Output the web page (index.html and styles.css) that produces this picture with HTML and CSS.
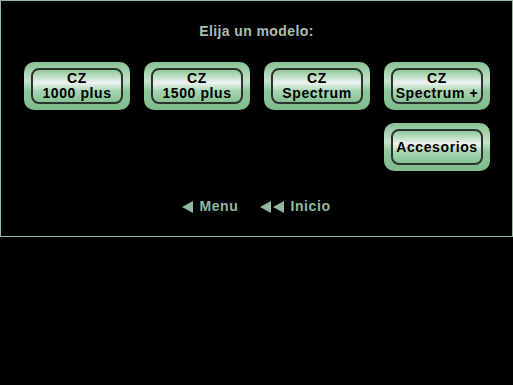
FILE: index.html
```html
<!DOCTYPE html>
<html lang="es">
<head>
    <meta charset="UTF-8">
    <title>Modelos</title>
    <link rel="stylesheet" href="styles.css">
</head>
<body>
    <div class="frame">
        <h1 class="title">Elija un modelo:</h1>
        <div class="models">
            <a class="model"><span class="inner">CZ<br>1000 plus</span></a>
            <a class="model"><span class="inner">CZ<br>1500 plus</span></a>
            <a class="model"><span class="inner">CZ<br>Spectrum</span></a>
            <a class="model"><span class="inner">CZ<br>Spectrum +</span></a>
            <a class="model extra"><span class="inner">Accesorios</span></a>
        </div>
        <div class="nav">
            <a class="link">
                <svg class="arrow" width="11" height="12" viewBox="0 0 11 12"><polygon points="11,0 11,12 0,6" fill="#8fb9a0"/></svg>
                Menu
            </a>
            <a class="link">
                <svg class="arrow" width="24" height="12" viewBox="0 0 24 12"><polygon points="11,0 11,12 0,6" fill="#8fb9a0"/><polygon points="24,0 24,12 13,6" fill="#8fb9a0"/></svg>
                Inicio
            </a>
        </div>
    </div>
</body>
</html>
```

FILE: styles.css
```css
*{
    margin: 0;
    padding: 0;
    box-sizing: border-box;
}
body{
    background: black;
    font-family: "Liberation Sans", Arial, sans-serif;
}
.frame{
    width: 513px;
    height: 237px;
    border: 1px solid #9ab3a2;
    padding-top: 22px;
}
.title{
    color: #a9bfb0;
    font-size: 14px;
    font-weight: bold;
    text-align: center;
    letter-spacing: 0.4px;
    line-height: 17px;
}
.models{
    display: grid;
    grid-template-columns: repeat(4, 106px);
    column-gap: 14px;
    row-gap: 13px;
    margin: 22px 0 0 23px;
}
.model{
    height: 48px;
    border-radius: 10px;
    padding: 6px 7px;
    background: linear-gradient(#86c194, #c6e2cb 40%, #8fc79c 60%, #7fbb8e);
    display: flex;
}
.model .inner{
    flex: 1;
    border: 2px solid #2a332c;
    border-radius: 8px;
    background: linear-gradient(#8fc99c, #eef2ee 40%, #a9d6b3 65%, #86c294);
    color: black;
    font-size: 14px;
    font-weight: bold;
    line-height: 15px;
    letter-spacing: 0.6px;
    text-align: center;
    display: flex;
    align-items: center;
    justify-content: center;
}
.model.extra{
    grid-column: 4;
}
.nav{
    display: flex;
    justify-content: center;
    gap: 22px;
    margin-top: 27px;
    padding-left: 0;
}
.nav .link{
    display: flex;
    align-items: center;
    gap: 6px;
    color: #8fb9a0;
    font-size: 14px;
    font-weight: bold;
    letter-spacing: 0.6px;
    line-height: 17px;
}
```
